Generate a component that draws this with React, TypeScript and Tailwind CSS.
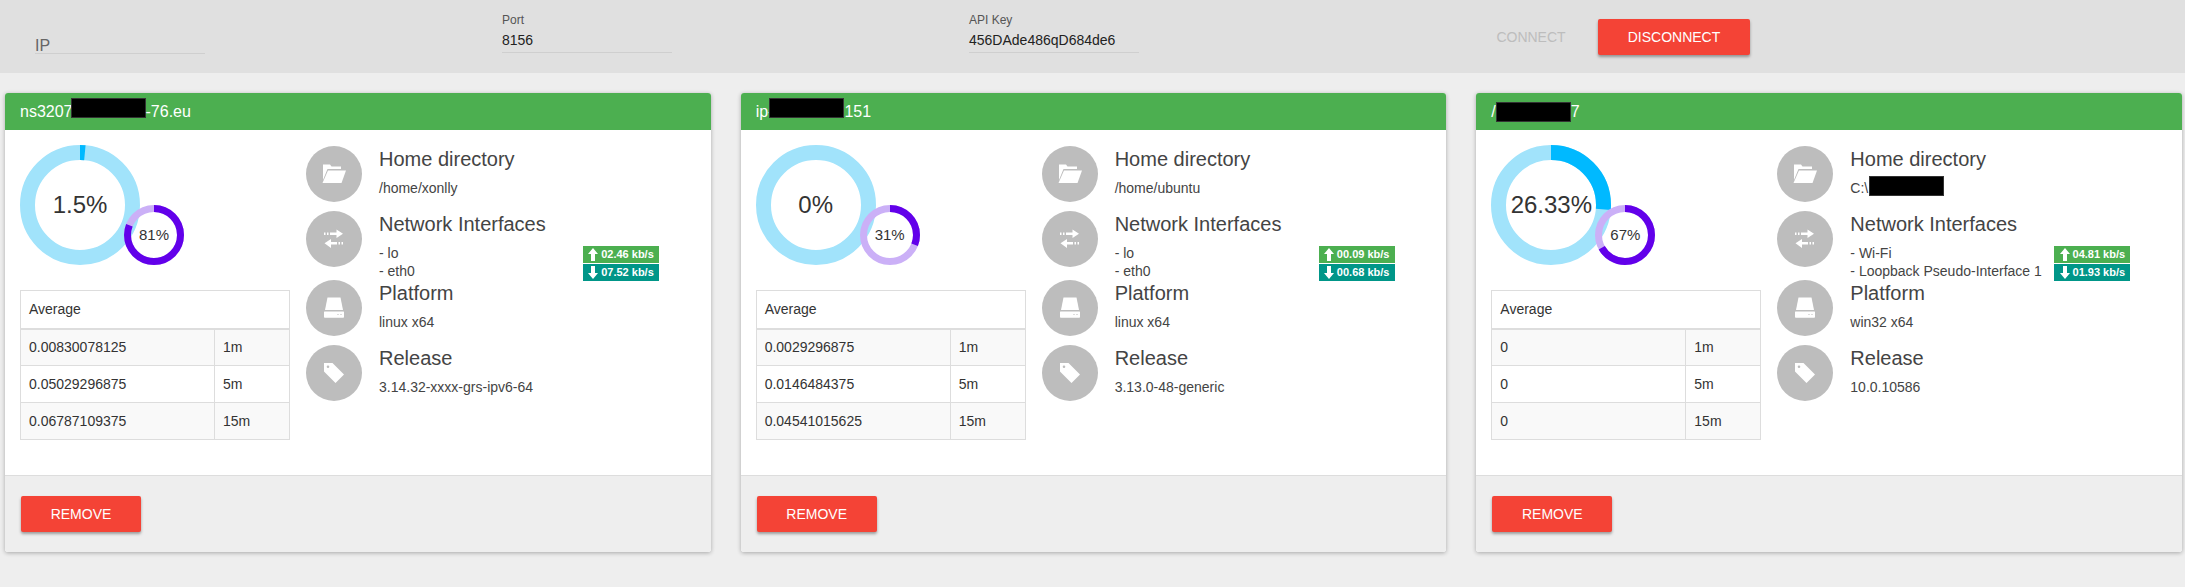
const FONT = "font-['Liberation_Sans',Arial,sans-serif]";

function Donut({ size, stroke, percent, light, strong }: { size: number; stroke: number; percent: number; light: string; strong: string }) {
  const r = (size - stroke) / 2;
  return (
    <svg width={size} height={size} className="block">
      <circle cx={size / 2} cy={size / 2} r={r} fill="none" stroke={light} strokeWidth={stroke} />
      <circle
        cx={size / 2}
        cy={size / 2}
        r={r}
        fill="none"
        stroke={strong}
        strokeWidth={stroke}
        pathLength={100}
        strokeDasharray={`${percent} 100`}
        transform={`rotate(-90 ${size / 2} ${size / 2})`}
      />
    </svg>
  );
}

function FolderIcon() {
  return (
    <svg width="26" height="26" viewBox="0 0 26 26" fill="#fff">
      <path d="M2 3.500h7l1.500 2H20v2.500H6.500L2 19z" />
      <path d="M7 9.500h18L20.500 22H1.500z" />
    </svg>
  );
}

function ExchangeIcon() {
  return (
    <svg width="20" height="20" viewBox="0 0 20 20" fill="#fff">
      <path d="M0 3.500h1.500V6H0zM3 3.500h1.500V6H3zM6 3.500h6.500V0.500L19 4.800 12.500 9V6H6z" />
      <path d="M19 13h-1.500v2.500H19zM16 13h-1.500v2.500H16zM13 13H7v-3L0.500 14.300 7 19v-3.500h6z" />
    </svg>
  );
}

function DriveIcon() {
  return (
    <svg width="22" height="24" viewBox="0 0 22 24" fill="#fff">
      <path d="M4.500 1.500h13L20 14H2z" />
      <path fillRule="evenodd" d="M1.500 15.500h19q.5 0 .5.5v5q0 .8-.8.8H1.800q-.8 0-.8-.8v-5q0-.5.500-.5zM14.500 18h1v1h-1zM17.500 18h1v1h-1z" />
    </svg>
  );
}

function TagIcon() {
  return (
    <svg width="24" height="24" viewBox="0 0 24 24" fill="#fff">
      <path fillRule="evenodd" d="M2 2h8.500L22 13.500 13.500 22 2 10.500zM6 4.500a1.300 1.300 0 1 0 0 2.600 1.300 1.300 0 0 0 0-2.600z" />
    </svg>
  );
}

function ArrowUp() {
  return (
    <svg width="10" height="13" viewBox="0 0 10 13" fill="#fff" className="mr-[3px] shrink-0">
      <path d="M5 0l5 6H7v7H3V6H0z" />
    </svg>
  );
}

function ArrowDown() {
  return (
    <svg width="10" height="13" viewBox="0 0 10 13" fill="#fff" className="mr-[3px] shrink-0">
      <path d="M5 13l5-6H7V0H3v7H0z" />
    </svg>
  );
}

function Redacted() {
  return <span className="inline-block h-5 w-[75px] shrink-0 border border-[#333] bg-black" />;
}

function InfoRow({ icon, title, className, children }: { icon: React.ReactNode; title: string; className: string; children: React.ReactNode }) {
  return (
    <div className={`flex ${className}`}>
      <div className="flex h-14 w-14 shrink-0 items-center justify-center rounded-full bg-[#bdbdbd]">{icon}</div>
      <div className="ml-[17px] min-w-0 flex-1 pt-px">
        <div className="text-[20px] leading-[24px] text-[#444]">{title}</div>
        <div className="mt-2 text-[14px] leading-[18px] text-[#444]">{children}</div>
      </div>
    </div>
  );
}

type Server = {
  title: React.ReactNode;
  cpu: number;
  cpuLabel: string;
  mem: number;
  load: [string, string][];
  home: React.ReactNode;
  nets: string[];
  up: string;
  down: string;
  platform: string;
  release: string;
};

const servers: Server[] = [
  {
    title: (
      <>
        ns3207
        <span className="-ml-[2px]"><Redacted /></span>
        -76.eu
      </>
    ),
    cpu: 1.5,
    cpuLabel: "1.5%",
    mem: 81,
    load: [
      ["0.00830078125", "1m"],
      ["0.05029296875", "5m"],
      ["0.06787109375", "15m"],
    ],
    home: "/home/xonlly",
    nets: ["- lo", "- eth0"],
    up: "02.46 kb/s",
    down: "07.52 kb/s",
    platform: "linux x64",
    release: "3.14.32-xxxx-grs-ipv6-64",
  },
  {
    title: (
      <>
        ip-
        <span className="-ml-[4px]"><Redacted /></span>
        151
      </>
    ),
    cpu: 0,
    cpuLabel: "0%",
    mem: 31,
    load: [
      ["0.0029296875", "1m"],
      ["0.0146484375", "5m"],
      ["0.04541015625", "15m"],
    ],
    home: "/home/ubuntu",
    nets: ["- lo", "- eth0"],
    up: "00.09 kb/s",
    down: "00.68 kb/s",
    platform: "linux x64",
    release: "3.13.0-48-generic",
  },
  {
    title: (
      <>
        /
        <Redacted />
        7
      </>
    ),
    cpu: 26.33,
    cpuLabel: "26.33%",
    mem: 67,
    load: [
      ["0", "1m"],
      ["0", "5m"],
      ["0", "15m"],
    ],
    home: (
      <span className="flex h-[18px] items-start">
        C:\
        <span className="-mt-[3px] ml-px"><Redacted /></span>
      </span>
    ),
    nets: ["- Wi-Fi", "- Loopback Pseudo-Interface 1"],
    up: "04.81 kb/s",
    down: "01.93 kb/s",
    platform: "win32 x64",
    release: "10.0.10586",
  },
];

function ServerCard({ server }: { server: Server }) {
  return (
    <div className="flex h-[459px] flex-col overflow-hidden rounded-[3px] bg-white shadow-[0_1px_4px_rgba(0,0,0,0.3)]">
      <div className="flex h-[37px] items-center bg-[#4caf50] pl-[15px] text-[16px] text-white">{server.title}</div>
      <div className="flex flex-1 pl-[15px]">
        <div className="w-[271px] shrink-0 pt-[15px]">
          <div className="flex">
            <div className="relative h-[120px] w-[120px]">
              <Donut size={120} stroke={15} percent={server.cpu} light="#a1e3fb" strong="#00b9ff" />
              <div className="absolute inset-0 flex items-center justify-center text-[24px] text-[#333]">{server.cpuLabel}</div>
            </div>
            <div className="relative -ml-[16px] mt-[60px] h-[60px] w-[60px]">
              <Donut size={60} stroke={7} percent={server.mem} light="#cbb0f7" strong="#6200ea" />
              <div className="absolute inset-0 flex items-center justify-center text-[15px] text-[#333]">{server.mem}%</div>
            </div>
          </div>
          <table className="mt-[25px] w-[270px] border-collapse text-[14px] text-[#333]">
            <thead>
              <tr className="h-[38px] border-b-2 border-[#ddd]">
                <th colSpan={2} className="border border-[#ddd] px-2 text-left font-normal">Average</th>
              </tr>
            </thead>
            <tbody>
              {server.load.map(([value, unit], i) => (
                <tr key={unit} className={`h-[37px] ${i % 2 === 0 ? "bg-[#f9f9f9]" : "bg-white"}`}>
                  <td className="w-[194px] border border-[#ddd] px-2">{value}</td>
                  <td className="border border-[#ddd] px-2">{unit}</td>
                </tr>
              ))}
            </tbody>
          </table>
        </div>
        <div className="ml-[15px] min-w-0 flex-1 pt-[16px]">
          <InfoRow icon={<FolderIcon />} title="Home directory" className="h-[65px]">
            {server.home}
          </InfoRow>
          <InfoRow icon={<ExchangeIcon />} title="Network Interfaces" className="h-[69px]">
            <div className="relative">
              {server.nets.map((n) => (
                <div key={n}>{n}</div>
              ))}
              <div className="absolute left-[204px] top-[2px] w-[76px] text-[11px] font-bold leading-[17px] text-white">
                <div className="flex h-[17px] items-center justify-center bg-[#4caf50]"><ArrowUp />{server.up}</div>
                <div className="mt-px flex h-[17px] items-center justify-center bg-[#009688]"><ArrowDown />{server.down}</div>
              </div>
            </div>
          </InfoRow>
          <InfoRow icon={<DriveIcon />} title="Platform" className="h-[65px]">
            {server.platform}
          </InfoRow>
          <InfoRow icon={<TagIcon />} title="Release" className="h-[65px]">
            {server.release}
          </InfoRow>
        </div>
      </div>
      <div className="flex h-[77px] items-center border-t border-[#ddd] bg-[#eee] pl-4">
        <button className="h-9 w-[120px] rounded-[2px] bg-[#f44336] text-[14px] text-white shadow-[0_2px_3px_rgba(0,0,0,0.35)]">REMOVE</button>
      </div>
    </div>
  );
}

function Field({ label, value }: { label: string; value: string }) {
  return (
    <div className="w-[170px] pt-[13px]">
      <div className="text-[12px] leading-[14px] text-[#555]">{label}</div>
      <div className="flex h-[26px] items-center border-b border-[#cfcfcf] pt-[2px] text-[14px] text-[#222]">{value}</div>
    </div>
  );
}

export default function App() {
  return (
    <div className={`min-h-screen bg-[#eee] ${FONT}`}>
      <div className="grid h-[73px] grid-cols-[467px_467px_467px_1fr] bg-[#e0e0e0] pl-[35px]">
        <div className="w-[170px] pt-[36px]">
          <div className="h-[18px] border-b border-[#cfcfcf] text-[16px] leading-[20px] text-[#666]">IP</div>
        </div>
        <Field label="Port" value="8156" />
        <Field label="API Key" value="456DAde486qD684de6" />
        <div className="flex items-start pl-[45px] pt-[19px]">
          <button className="h-9 w-[100px] text-[14px] text-[#bdbdbd]">CONNECT</button>
          <button className="ml-[17px] h-9 w-[152px] rounded-[2px] bg-[#f44336] text-[14px] text-white shadow-[0_2px_3px_rgba(0,0,0,0.35)]">DISCONNECT</button>
        </div>
      </div>
      <div className="grid grid-cols-3 gap-[30px] pl-[5px] pr-[3px] pt-[20px]">
        {servers.map((s, i) => (
          <ServerCard key={i} server={s} />
        ))}
      </div>
    </div>
  );
}
